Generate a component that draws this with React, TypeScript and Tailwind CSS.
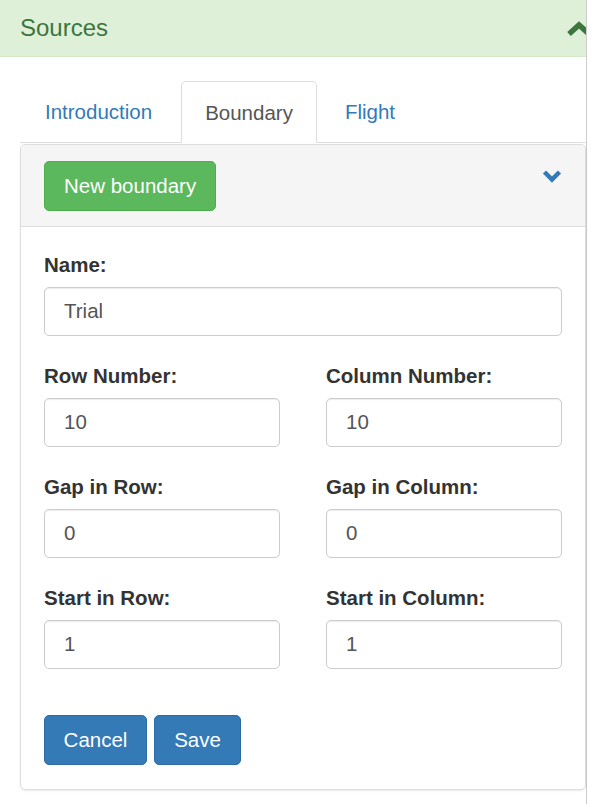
import React from 'react';

const font = "font-['Liberation_Sans',Arial,sans-serif]";

function Field({ label, value }: { label: string; value: string }) {
    return (
        <div>
            <label className="block text-[20.5px] leading-[28px] font-bold text-[#333] mb-[8px]">{label}</label>
            <div className="h-[49px] border border-[#ccc] rounded-[5px] shadow-[inset_0_1px_1px_rgba(0,0,0,0.075)] flex items-center pl-[19px] text-[20.5px] text-[#555]">
                {value}
            </div>
        </div>
    );
}

export default function App() {
    return (
        <div className={`w-[609px] h-[804px] bg-white overflow-hidden ${font}`}>
            <div className="w-[587px] h-full border-r border-[#ccc]">
                {/* Panel heading */}
                <div className="h-[57px] bg-[#dff0d8] border-b border-[#d6e9c6] flex items-center justify-between pl-[20px] overflow-hidden">
                    <span className="text-[24px] text-[#3c763d]">Sources</span>
                    <svg className="w-[26px] h-[16px] -mr-[6px] mt-[2px]" viewBox="0 0 26 16">
                        <path d="M3 13 L13 4 L23 13" fill="none" stroke="#3c763d" strokeWidth={5.5} strokeLinejoin="miter" />
                    </svg>
                </div>

                <div className="pl-[20px] pt-[24px]">
                    {/* Tabs */}
                    <ul className="flex gap-[3px] border-b border-[#ddd] h-[62px]">
                        <li className="pl-[25px] pr-[24px] flex items-center text-[20.5px] text-[#337ab7] pt-[2px]">Introduction</li>
                        <li className="px-[23px] flex items-center text-[20.5px] text-[#555] bg-white border border-[#ddd] border-b-transparent rounded-t-[5px] -mb-px ml-[2px] pt-[2px]">Boundary</li>
                        <li className="px-[25px] flex items-center text-[20.5px] text-[#337ab7] pt-[2px]">Flight</li>
                    </ul>

                    {/* Card */}
                    <div className="mt-[1px] border border-[#ddd] rounded-[5px] shadow-[0_1px_2px_rgba(0,0,0,0.08)]">
                        <div className="bg-[#f5f5f5] border-b border-[#ddd] rounded-t-[5px] flex justify-between px-[23px] pt-[16px] pb-[15px]">
                            <button className="h-[50px] px-[19px] bg-[#5cb85c] border border-[#4cae4c] rounded-[5px] text-white text-[20.5px]">
                                New boundary
                            </button>
                            <svg className="w-[20px] h-[14px] mt-[8px]" viewBox="0 0 20 14">
                                <path d="M2.5 3 L10 10.5 L17.5 3" fill="none" stroke="#337ab7" strokeWidth={4.5} strokeLinejoin="miter" />
                            </svg>
                        </div>

                        <div className="px-[23px] pt-[24px] pb-[24px]">
                            <div className="mb-[26px]">
                                <Field label="Name:" value="Trial" />
                            </div>
                            <div className="grid grid-cols-2 gap-x-[46px] gap-y-[26px]">
                                <Field label="Row Number:" value="10" />
                                <Field label="Column Number:" value="10" />
                                <Field label="Gap in Row:" value="0" />
                                <Field label="Gap in Column:" value="0" />
                                <Field label="Start in Row:" value="1" />
                                <Field label="Start in Column:" value="1" />
                            </div>
                            <div className="flex gap-[7px] mt-[46px]">
                                <button className="h-[50px] w-[103px] bg-[#337ab7] border border-[#2e6da4] rounded-[5px] text-white text-[20.5px]">Cancel</button>
                                <button className="h-[50px] w-[87px] bg-[#337ab7] border border-[#2e6da4] rounded-[5px] text-white text-[20.5px]">Save</button>
                            </div>
                        </div>
                    </div>
                </div>
            </div>
        </div>
    );
}
